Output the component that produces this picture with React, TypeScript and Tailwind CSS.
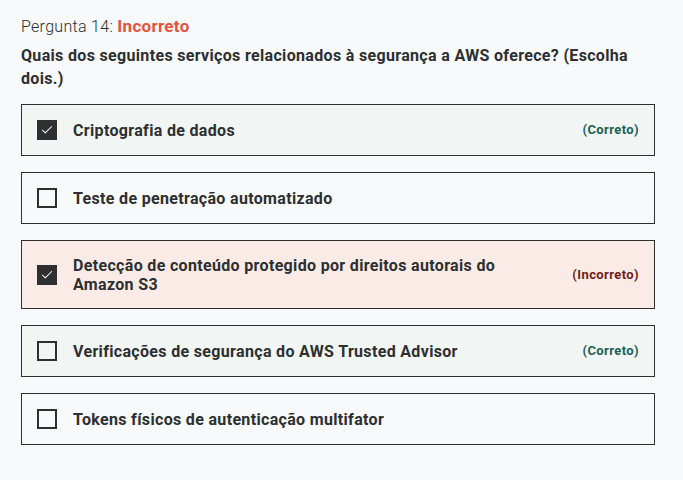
import { Check } from "lucide-react";

type Option = {
  text: string;
  checked: boolean;
  status?: "correct" | "incorrect";
};

const OPTIONS: Option[] = [
  { text: "Criptografia de dados", checked: true, status: "correct" },
  { text: "Teste de penetração automatizado", checked: false },
  {
    text: "Detecção de conteúdo protegido por direitos autorais do Amazon S3",
    checked: true,
    status: "incorrect",
  },
  { text: "Verificações de segurança do AWS Trusted Advisor", checked: false, status: "correct" },
  { text: "Tokens físicos de autenticação multifator", checked: false },
];

function OptionRow({ opt }: { opt: Option }) {
  const bg =
    opt.status === "correct" ? "bg-[#f1f5f4]" : opt.status === "incorrect" ? "bg-[#fbebe7]" : "bg-[#f7f9fa]";
  return (
    <div className={`flex items-center gap-4 border border-[#2d2f31] ${bg} px-[15px] py-[14.5px] min-h-[52px]`}>
      {opt.checked ? (
        <span className="w-5 h-5 flex-shrink-0 bg-[#2d2f31] flex items-center justify-center">
          <Check className="w-3.5 h-3.5 text-white" strokeWidth={1.75} />
        </span>
      ) : (
        <span className="w-5 h-5 flex-shrink-0 border-2 border-[#2d2f31]" />
      )}
      <span className="flex-1 max-w-[450px] text-[16px] leading-[19px] font-bold tracking-[0.33px] text-[#2d2f31]">
        {opt.text}
      </span>
      <span className="ml-auto text-[13px] font-bold tracking-[0.4px]">
        {opt.status === "correct" && <span className="text-[#1e6055]">(Correto)</span>}
        {opt.status === "incorrect" && <span className="text-[#6e1c1a]">(Incorreto)</span>}
      </span>
    </div>
  );
}

export default function App() {
  return (
    <div className="min-h-[480px] bg-[#f7f9fa] px-[21px] pt-[15px] text-[#2d2f31]" style={{ fontFamily: "Roboto, sans-serif" }}>
      <p className="text-[16px] leading-[22px] font-light tracking-[0.3px]">
        Pergunta 14: <span className="text-[17px] font-bold text-[#e2553c]">Incorreto</span>
      </p>
      <p className="mt-[6px] w-[634px] text-[16px] leading-[23px] font-bold tracking-[0.33px]">
        Quais dos seguintes serviços relacionados à segurança a AWS oferece? (Escolha dois.)
      </p>
      <div className="mt-[14px] w-[634px] flex flex-col gap-4">
        {OPTIONS.map((o) => (
          <OptionRow key={o.text} opt={o} />
        ))}
      </div>
    </div>
  );
}
